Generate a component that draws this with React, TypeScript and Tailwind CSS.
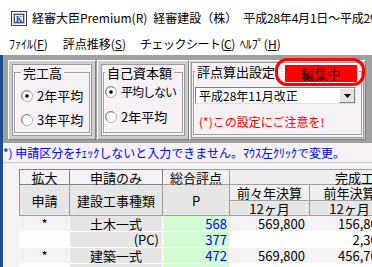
import React from 'react';

function AppIcon() {
  return (
    <svg width="16" height="15" viewBox="0 0 16 15" className="shrink-0">
      <rect x="0.5" y="0.5" width="15" height="14" fill="#c0c0c0" stroke="#404040" />
      <rect x="1.5" y="1.5" width="13" height="12" fill="none" stroke="#ffffff" />
      <rect x="3.5" y="3.5" width="9" height="8" fill="#eef2ff" stroke="#3050a0" />
      <text x="8" y="10.5" textAnchor="middle" fontSize="8" fontWeight="bold" fill="#1a3c8c" fontFamily="Liberation Serif">K</text>
    </svg>
  );
}

function Radio({ checked }: { checked?: boolean }) {
  return (
    <svg width="12" height="12" viewBox="0 0 12 12" className="shrink-0">
      <circle cx="6" cy="6" r="5.5" fill="#ffffff" stroke="#b0b0b0" />
      <path d="M2.2 9.2 A4.6 4.6 0 0 1 9.2 2.2" fill="none" stroke="#808080" />
      {checked && <circle cx="6" cy="6" r="1.8" fill="#000000" />}
    </svg>
  );
}

function Panel({ className, pad, children }: { className: string; pad: string; children: React.ReactNode }) {
  return (
    <div className={'h-[80px] shrink-0 bg-[#cdcdcd] border border-t-white border-l-white border-r-[#808080] border-b-[#808080] ' + pad + ' ' + className}>
      <div className="h-full bg-[#f5f1f5] border border-[#9a9a9a] px-[1px] pb-[2px]">
        {children}
      </div>
    </div>
  );
}

function GroupBox({ label, pl, children }: { label: React.ReactNode; pl: string; children: React.ReactNode }) {
  return (
    <fieldset className={'h-full border border-[#a0a0a0] shadow-[inset_1px_1px_0_#ffffff] pr-0 min-w-0 whitespace-nowrap ' + pl}>
      <legend className="px-[2px] text-[13px] leading-[15px] whitespace-nowrap">{label}</legend>
      {children}
    </fieldset>
  );
}

const hd = 'border border-[#a0a0a0] bg-[#f0f0f0] text-center p-0 font-normal whitespace-nowrap';
const hdBtn = 'border border-[#808080] bg-[#f5f1f5] text-center p-0 font-normal whitespace-nowrap';
const hd2 = 'border border-[#a0a0a0] bg-[#e6e6e6] text-center p-0 font-normal whitespace-nowrap';
const td = 'border border-white p-0 whitespace-nowrap';

const rows = [
  { mark: '*', kind: '土木一式', pc: false, p: '568', a: '569,800', b: '156,800', c: '158,200', bg: 'bg-[#f5f1f5]' },
  { mark: '', kind: '(PC)', pc: true, p: '377', a: '', b: '2,300', c: '1,800', bg: 'bg-white' },
  { mark: '*', kind: '建築一式', pc: false, p: '472', a: '569,800', b: '456,700', c: '402,100', bg: 'bg-[#f5f1f5]' },
  { mark: '', kind: '', pc: false, p: '', a: '', b: '', c: '', bg: 'bg-white' },
];

export default function App() {
  return (
    <div className="w-[372px] h-[267px] overflow-hidden bg-white font-['Noto_Sans_CJK_JP',sans-serif] text-black flex flex-col">
      {/* title bar */}
      <div className="h-[32px] pt-[4px] pl-[11px] flex items-center shrink-0 whitespace-nowrap text-[12px] leading-none">
        <AppIcon />
        <span className="ml-[5px]">経審大臣Premium(R)</span>
        <span className="ml-[6px]">経審建設（株）</span>
        <span className="ml-[6px] tracking-[-0.2px]">平成28年4月1日～平成29年3月31日</span>
      </div>

      {/* menu bar */}
      <div className="h-[23px] flex items-center text-[12px] leading-none shrink-0 whitespace-nowrap">
        <span className="ml-[9px]">ﾌｧｲﾙ(<span className="underline">F</span>)</span>
        <span className="ml-[15px]">評点推移(<span className="underline">S</span>)</span>
        <span className="ml-[14px] tracking-[-0.5px]">チェックシート(<span className="underline">C</span>)</span>
        <span className="ml-[5px]">ﾍﾙﾌﾟ(<span className="underline">H</span>)</span>
      </div>

      <div className="flex flex-1 min-h-0">
        <div className="w-[3px] shrink-0 bg-[#1f4e8c]" />
        <div className="flex-1 min-w-0 flex flex-col">
          {/* settings panels */}
          <div className="h-[88px] shrink-0 bg-[#a0a0a0] flex pt-[5px] pl-[5px]">
            <Panel className="w-[88px]" pad="p-[3px]">
              <GroupBox label="完工高" pl="pl-[6px]">
                <div className="flex flex-col gap-[8px] pt-[8px] text-[13px]">
                  <div className="h-[16px] flex items-center gap-[4px]"><Radio checked />2年平均</div>
                  <div className="h-[16px] flex items-center gap-[4px]"><Radio />3年平均</div>
                </div>
              </GroupBox>
            </Panel>
            <Panel className="w-[92px] ml-[1px]" pad="p-[3px]">
              <GroupBox label="自己資本額" pl="pl-[1px]">
                <div className="flex flex-col gap-[9px] pt-[4px] text-[13px]">
                  <div className="h-[16px] flex items-center gap-[4px]"><Radio checked /><span className="text-[12px] tracking-[-1px]">平均しない</span></div>
                  <div className="h-[16px] flex items-center gap-[4px]"><Radio />2年平均</div>
                </div>
              </GroupBox>
            </Panel>
            <Panel className="w-[177px]" pad="p-[1px]">
              <GroupBox
                pl="pl-[1px]"
                label={
                  <span className="inline-flex items-center">
                    <span>評点算出設定</span>
                    <span className="relative ml-[10px] translate-y-[2px] w-[72px] h-[17px] bg-[#ff0000] flex items-center justify-center text-[13px]">
                      編集中
                      <span className="absolute left-[-10px] right-[-8px] top-[-7px] bottom-[-4px] border-[3px] border-[#ff0000] rounded-[12px]" />
                    </span>
                  </span>
                }
              >
                <div className="flex flex-col pt-[7px]">
                  <div className="w-[161px] h-[17px] bg-white border border-t-[#808080] border-l-[#808080] border-r-[#e0e0e0] border-b-[#e0e0e0] flex items-center">
                    <span className="flex-1 pl-[3px] text-[12px] leading-none whitespace-nowrap">平成28年11月改正</span>
                    <span className="w-[16px] h-[15px] bg-[#e4e4e4] border border-t-white border-l-white border-r-[#808080] border-b-[#808080] flex items-center justify-center">
                      <svg width="7" height="4" viewBox="0 0 7 4"><polygon points="0,0 7,0 3.5,4" fill="#000" /></svg>
                    </span>
                  </div>
                  <div className="mt-[12px] pl-[4px] text-[12px] leading-none text-[#ff0000] whitespace-nowrap">(*)この設定にご注意を!</div>
                </div>
              </GroupBox>
            </Panel>
          </div>

          {/* note */}
          <div className="h-[20px] shrink-0 bg-[#f5f1f5] border-b border-[#c8c8c8] flex items-center text-[12px] leading-none text-[#0000ff] whitespace-nowrap">
            *) 申請区分をﾁｪｯｸしないと入力できません。ﾏｳｽ左ｸﾘｯｸで変更。
          </div>

          {/* grid */}
          <div className="flex-1 bg-[#f5f1f5] pt-[6px] pl-[16px] overflow-hidden">
            <table className="table-fixed border-collapse text-[13px] leading-none w-[486px]">
              <colgroup>
                <col className="w-[50px]" />
                <col className="w-[93px]" />
                <col className="w-[67px]" />
                <col className="w-[80px]" />
                <col className="w-[80px]" />
                <col className="w-[116px]" />
              </colgroup>
              <thead>
                <tr className="h-[15px]">
                  <th className={hdBtn}>拡大</th>
                  <th className={hdBtn}>申請のみ</th>
                  <th className={hd}>総合評点</th>
                  <th className={hd} colSpan={3}>完成工事高</th>
                </tr>
                <tr className="h-[16px]">
                  <th className={hd2} rowSpan={2}>申請</th>
                  <th className={hd2} rowSpan={2}>建設工事種類</th>
                  <th className={hd2} rowSpan={2}>P</th>
                  <th className={hd}>前々年決算</th>
                  <th className={hd}>前年決算</th>
                  <th className={hd}>当期決算</th>
                </tr>
                <tr className="h-[15px]">
                  <th className={hd2}>12ヶ月</th>
                  <th className={hd2}>12ヶ月</th>
                  <th className={hd2}>12ヶ月</th>
                </tr>
              </thead>
              <tbody>
                {rows.map((r, i) => (
                  <tr key={i} className="h-[16px]">
                    <td className={td + ' text-center ' + r.bg}>{r.mark}</td>
                    <td className={td + ' bg-[#e6e6e6] ' + (r.pc ? 'text-right pr-[3px]' : 'text-center')}>{r.kind}</td>
                    <td className={td + ' bg-[#d4fcd4] text-right pr-[2px] text-[#0000ff]'}>{r.p}</td>
                    <td className={td + ' text-right pr-[4px] ' + r.bg}>{r.a}</td>
                    <td className={td + ' text-right pr-[4px] ' + r.bg}>{r.b}</td>
                    <td className={td + ' text-right pr-[4px] ' + r.bg}>{r.c}</td>
                  </tr>
                ))}
              </tbody>
            </table>
          </div>
        </div>
      </div>
    </div>
  );
}
